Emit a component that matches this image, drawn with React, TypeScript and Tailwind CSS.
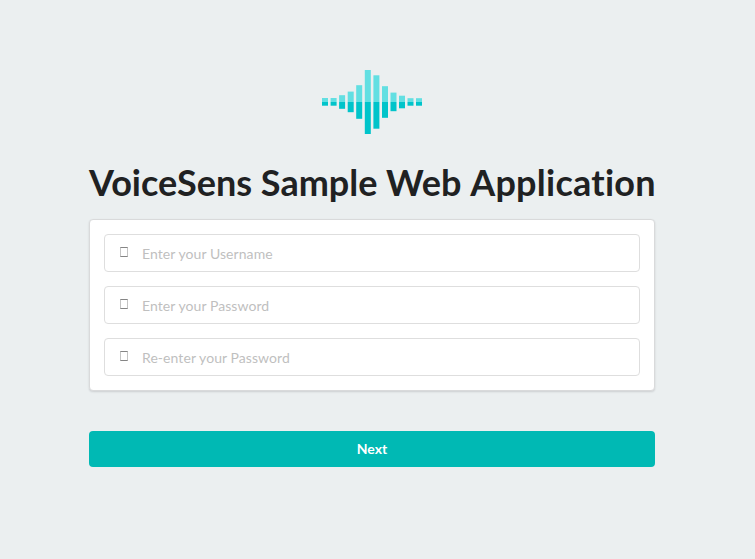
import React from "react";

const bars = [
  { x: 0, top: 28, bottom: 35.7 },
  { x: 8.6, top: 28, bottom: 35.7 },
  { x: 17.1, top: 25.2, bottom: 38.8 },
  { x: 25.7, top: 21.6, bottom: 42.2 },
  { x: 34.2, top: 15.2, bottom: 48.8 },
  { x: 42.8, top: 0, bottom: 64 },
  { x: 51.4, top: 5.3, bottom: 58.7 },
  { x: 60, top: 16.2, bottom: 47.8 },
  { x: 68.5, top: 22.6, bottom: 41.2 },
  { x: 77, top: 25.7, bottom: 38.3 },
  { x: 85.5, top: 28.2, bottom: 35.7 },
  { x: 94, top: 28.2, bottom: 35.7 },
];

function Logo() {
  return (
    <svg width="100" height="64" viewBox="0 0 100 64" className="block">
      {bars.map((b) => (
        <g key={b.x}>
          <rect x={b.x} y={b.top} width="6" height={32 - b.top} fill="#62dfe2" />
          <rect x={b.x} y="32" width="6" height={b.bottom - 32} fill="#00c4ca" />
        </g>
      ))}
    </svg>
  );
}

function Field({ label, type }: { label: string; type: string }) {
  return (
    <label className="flex h-[38px] items-center rounded border border-[#dedede] bg-white">
      <span className="-mt-[2px] ml-[15px] block h-[10px] w-2 border border-x-[#c4c4c4] border-y-[#858585]" />
      <input
        type={type}
        placeholder={label}
        className="ml-[14px] min-w-0 flex-1 bg-transparent text-[14px] leading-[17px] tracking-[0.07px] outline-none placeholder:text-[#bfbfbf]"
      />
    </label>
  );
}

export default function App() {
  return (
    <main className="flex h-[559px] w-[755px] flex-col bg-[#ebeff0] px-[89px] pt-[70px] font-[Lato,sans-serif] text-[#1b1c1d]">
      <div className="ml-[233px]">
        <Logo />
      </div>
      <h1 className="mt-[25px] w-[566px] whitespace-nowrap text-[36px] font-bold leading-[46px] tracking-[0.02px] text-[#202122] [font-variant-ligatures:none]">
        VoiceSens Sample Web <span className="tracking-[0.26px]">Application</span>
      </h1>
      <form className="mt-[14px] flex h-[172px] w-[566px] shrink-0 flex-col gap-[14px] rounded border border-[#d9dadb] bg-white p-[14px] shadow-[0_1px_2px_0_rgba(34,36,38,0.15)]">
        <Field label="Enter your Username" type="text" />
        <Field label="Enter your Password" type="password" />
        <Field label="Re-enter your Password" type="password" />
      </form>
      <button className="mt-10 h-9 w-[566px] rounded bg-[#00b9b4] pb-[2px] text-[14px] font-bold text-white">
        Next
      </button>
    </main>
  );
}
